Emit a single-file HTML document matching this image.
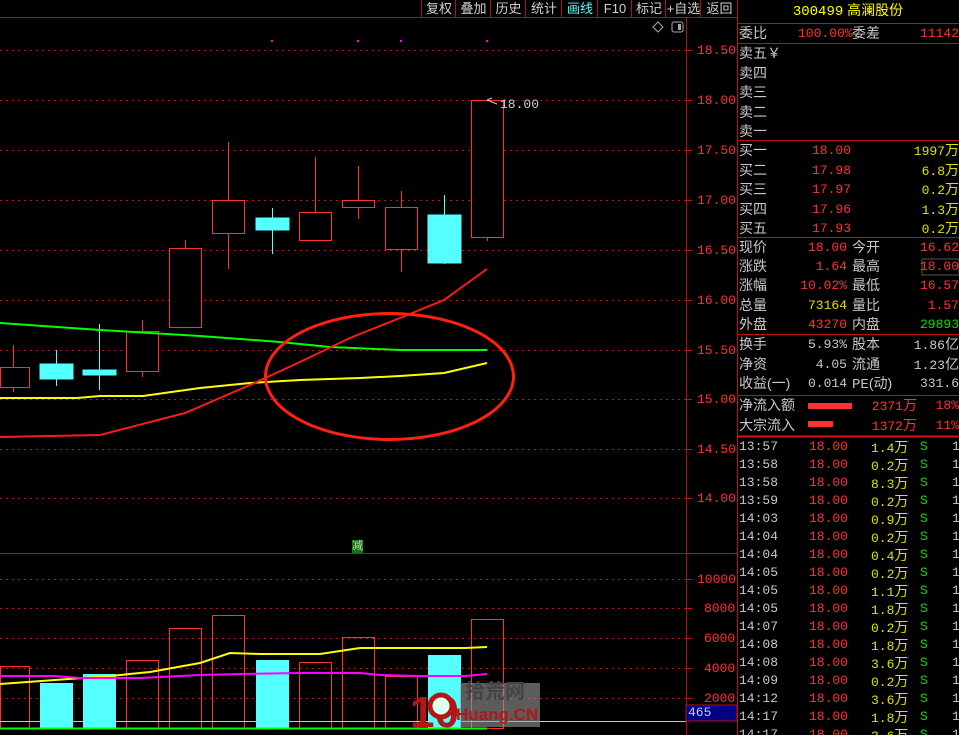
<!DOCTYPE html>
<html><head><meta charset="utf-8">
<style>
html,body{margin:0;padding:0;background:#000;width:959px;height:735px;overflow:hidden}
body{position:relative;font-family:"Liberation Mono","Noto Sans CJK SC",monospace;font-size:13px}
.t{position:absolute;white-space:nowrap;line-height:19px}
.t>div{overflow:visible;white-space:nowrap}
.w{color:#c8c8c8}.r{color:#ff3232}.y{color:#e0e000}.g{color:#00e000}.c{color:#54ffff}
.zh{font-family:"Liberation Sans","Noto Sans CJK SC",sans-serif;font-size:14px}
.h195>div{height:19.5px;line-height:19.5px}
.h192>div{height:19.2px;line-height:19.2px}
.h18>div{height:18px;line-height:18px}
.tb{position:absolute;top:0;height:17px;line-height:17px;text-align:center;color:#d0d0d0;font-family:"Liberation Sans","Noto Sans CJK SC",sans-serif;font-size:13px;border-left:1px solid #b01010}
</style></head><body>
<svg width="959" height="735" style="position:absolute;left:0;top:0">
<line x1="0" y1="17.5" x2="737" y2="17.5" stroke="#b01010"/>
<line x1="686.5" y1="17" x2="686.5" y2="735" stroke="#b01010"/>
<line x1="737.5" y1="0" x2="737.5" y2="735" stroke="#c01010"/>
<g stroke="#c01010" stroke-dasharray="2,4">
<line x1="0" y1="50.5" x2="686" y2="50.5"/><line x1="0" y1="100.5" x2="686" y2="100.5"/>
<line x1="0" y1="150.5" x2="686" y2="150.5"/><line x1="0" y1="200.5" x2="686" y2="200.5"/>
<line x1="0" y1="250.5" x2="686" y2="250.5"/><line x1="0" y1="300.5" x2="686" y2="300.5"/>
<line x1="0" y1="350.5" x2="686" y2="350.5"/><line x1="0" y1="399.5" x2="686" y2="399.5"/>
<line x1="0" y1="449.5" x2="686" y2="449.5"/><line x1="0" y1="498.5" x2="686" y2="498.5"/>
<line x1="0" y1="579.5" x2="686" y2="579.5"/><line x1="0" y1="608.5" x2="686" y2="608.5"/>
<line x1="0" y1="638.5" x2="686" y2="638.5"/><line x1="0" y1="668.5" x2="686" y2="668.5"/>
<line x1="0" y1="698.5" x2="686" y2="698.5"/>
</g>
<g stroke="#c01010">
<line x1="686" y1="50.5" x2="692" y2="50.5"/><line x1="686" y1="100.5" x2="692" y2="100.5"/><line x1="686" y1="150.5" x2="692" y2="150.5"/><line x1="686" y1="200.5" x2="692" y2="200.5"/><line x1="686" y1="250.5" x2="692" y2="250.5"/><line x1="686" y1="300.5" x2="692" y2="300.5"/><line x1="686" y1="350.5" x2="692" y2="350.5"/><line x1="686" y1="399.5" x2="692" y2="399.5"/><line x1="686" y1="449.5" x2="692" y2="449.5"/><line x1="686" y1="498.5" x2="692" y2="498.5"/>
<line x1="686" y1="579.5" x2="692" y2="579.5"/><line x1="686" y1="608.5" x2="692" y2="608.5"/><line x1="686" y1="638.5" x2="692" y2="638.5"/><line x1="686" y1="668.5" x2="692" y2="668.5"/><line x1="686" y1="698.5" x2="692" y2="698.5"/>
<line x1="0" y1="553.5" x2="737" y2="553.5"/>
<line x1="737" y1="23.5" x2="959" y2="23.5"/><line x1="737" y1="43.5" x2="959" y2="43.5"/>
<line x1="737" y1="140.5" x2="959" y2="140.5"/><line x1="737" y1="237.5" x2="959" y2="237.5"/>
<line x1="737" y1="334.5" x2="959" y2="334.5"/><line x1="737" y1="395.5" x2="959" y2="395.5"/>
<line x1="737" y1="436.5" x2="959" y2="436.5" stroke="#e01010" stroke-width="2"/>
</g>
<g fill="#ff00ff"><rect x="271" y="40" width="2" height="2"/><rect x="357" y="40" width="2" height="2"/><rect x="400" y="40" width="2" height="2"/><rect x="486" y="40" width="2" height="2"/></g>
<path d="M658 22 L663 27 L658 32 L653 27 Z" fill="none" stroke="#aaa"/>
<rect x="672" y="22" width="11" height="10" rx="2" fill="none" stroke="#aaa"/><rect x="678" y="24" width="3" height="6" fill="#aaa"/>
<g stroke="#ff3232" fill="none">
<line x1="13.5" y1="345" x2="13.5" y2="392"/><rect x="0.5" y="367.5" width="29" height="20" fill="#000"/>
<line x1="142.5" y1="320" x2="142.5" y2="377"/><rect x="126.5" y="331.5" width="32" height="40" fill="#000"/>
<line x1="185.5" y1="240" x2="185.5" y2="248"/><rect x="169.5" y="248.5" width="32" height="79" fill="#000"/>
<line x1="228.5" y1="142" x2="228.5" y2="269"/><rect x="212.5" y="200.5" width="32" height="33" fill="#000"/>
<line x1="315.5" y1="157" x2="315.5" y2="212"/><rect x="299.5" y="212.5" width="32" height="28" fill="#000"/>
<line x1="358.5" y1="166" x2="358.5" y2="219"/><rect x="342.5" y="200.5" width="32" height="7" fill="#000"/>
<line x1="401.5" y1="191" x2="401.5" y2="272"/><rect x="385.5" y="207.5" width="32" height="42" fill="#000"/>
<line x1="487.5" y1="237" x2="487.5" y2="241"/><rect x="471.5" y="100.5" width="32" height="137" fill="#000"/>
</g>
<g stroke="#54ffff" fill="#54ffff">
<line x1="56.5" y1="350" x2="56.5" y2="386"/><rect x="40" y="364" width="33" height="15"/>
<line x1="99.5" y1="324" x2="99.5" y2="390"/><rect x="83" y="370" width="33" height="5"/>
<line x1="272.5" y1="208" x2="272.5" y2="254"/><rect x="256" y="218" width="33" height="12"/>
<line x1="444.5" y1="195" x2="444.5" y2="264"/><rect x="428" y="215" width="33" height="48"/>
</g>
<polyline points="0,323 100,330 200,336 280,342 330,347 400,350 487,350" fill="none" stroke="#00ff00" stroke-width="2"/>
<polyline points="0,398 77,398 100,396 143,396 200,388 250,383 300,380 360,378 400,376 444,373 487,363" fill="none" stroke="#ffff00" stroke-width="2"/>
<polyline points="0,437 100,435 185,413 250,385 300,362 350,338 400,318 444,300 487,269" fill="none" stroke="#ff1a1a" stroke-width="2"/>
<ellipse cx="389.5" cy="376.5" rx="124" ry="63" fill="none" stroke="#ff2010" stroke-width="3"/>
<path d="M487 100 L497 104 M487 100 L492 98" stroke="#ccc" fill="none"/>
<g stroke="#ff3232" fill="none">
<rect x="0.5" y="666.5" width="29" height="62"/><rect x="126.5" y="660.5" width="32" height="68"/>
<rect x="169.5" y="628.5" width="32" height="100"/><rect x="212.5" y="615.5" width="32" height="113"/>
<rect x="299.5" y="662.5" width="32" height="66"/><rect x="342.5" y="637.5" width="32" height="91"/>
<rect x="385.5" y="676.5" width="32" height="52"/><rect x="471.5" y="619.5" width="32" height="109"/>
</g>
<g fill="#54ffff"><rect x="40" y="683" width="33" height="46"/><rect x="83" y="674" width="33" height="55"/><rect x="256" y="660" width="33" height="69"/><rect x="428" y="655" width="33" height="74"/></g>
<polyline points="0,684 55,680 110,676 150,672 200,663 230,653 260,654 320,654 360,648 465,648 487,647" fill="none" stroke="#ffff00" stroke-width="2"/>
<polyline points="0,676 55,676 80,678 140,678 200,675 240,674 300,673 360,673 380,675 420,676 465,676 487,674" fill="none" stroke="#ff00ff" stroke-width="2"/>
<line x1="0" y1="721.5" x2="686" y2="721.5" stroke="#c8c8c8"/>
<line x1="0" y1="728.5" x2="487" y2="728.5" stroke="#00ff00" stroke-width="2"/>
<rect x="686" y="705" width="51" height="16" fill="#000080" stroke="#c01010"/>
<rect x="352" y="540" width="11" height="13" fill="#0a7a0a"/>
<rect x="808" y="403" width="44" height="6" fill="#ff3232"/>
<rect x="808" y="421" width="25" height="6" fill="#ff3232"/>
<rect x="922" y="259" width="37" height="16" fill="none" stroke="#555"/>
<rect x="460" y="683" width="80" height="44" fill="#999" opacity="0.6"/>
<text x="410" y="727" font-family="Liberation Sans" font-weight="bold" font-size="44" fill="#b01818">10</text>
<circle cx="441" cy="706" r="11" fill="#dfe" stroke="#b01818" stroke-width="5"/>
</svg>
<div class="t zh" style="left:465px;top:680px;color:#444;font-size:20px;font-weight:bold;line-height:24px">拾荒网</div>
<div class="t" style="left:456px;top:705px;color:#b01818;font-family:'Liberation Sans';font-size:17px;font-weight:bold">Huang.CN</div>
<div class="t zh" style="left:352px;top:537px;color:#ccc;font-size:11px">减</div>
<div class="t" style="left:688px;top:703px;color:#c8c8ff">465</div>
<div class="t" style="left:500px;top:95px;color:#ccc">18.00</div>
<div class="tb" style="left:421px;width:34px">复权</div>
<div class="tb" style="left:455px;width:35px">叠加</div>
<div class="tb" style="left:490px;width:35px">历史</div>
<div class="tb" style="left:525px;width:36px">统计</div>
<div class="tb" style="left:561px;width:36px;color:#54ffff">画线</div>
<div class="tb" style="left:597px;width:34px">F10</div>
<div class="tb" style="left:631px;width:34px">标记</div>
<div class="tb" style="left:665px;width:35px">+自选</div>
<div class="tb" style="left:700px;width:37px">返回</div>
<div class="t r" style="left:697px;top:41px">18.50</div><div class="t r" style="left:697px;top:91px">18.00</div>
<div class="t r" style="left:697px;top:141px">17.50</div><div class="t r" style="left:697px;top:191px">17.00</div>
<div class="t r" style="left:697px;top:241px">16.50</div><div class="t r" style="left:697px;top:291px">16.00</div>
<div class="t r" style="left:697px;top:341px">15.50</div><div class="t r" style="left:697px;top:390px">15.00</div>
<div class="t r" style="left:697px;top:440px">14.50</div><div class="t r" style="left:697px;top:489px">14.00</div>
<div class="t r" style="left:697px;top:570px">10000</div><div class="t r" style="left:704px;top:599px">8000</div>
<div class="t r" style="left:704px;top:629px">6000</div><div class="t r" style="left:704px;top:659px">4000</div>
<div class="t r" style="left:704px;top:689px">2000</div>
<div class="t zh" style="left:737px;width:222px;top:1px;text-align:center;color:#ffff00"><span style="font-family:'Liberation Mono'">300499</span> 高澜股份</div>
<div class="t zh w" style="left:739px;top:24px">委比</div><div class="t r" style="left:798px;top:24px">100.00%</div><div class="t zh w" style="left:852px;top:24px">委差</div><div class="t r" style="right:0;top:24px">11142</div>
<div class="t zh w h195" style="left:739px;top:44px"><div>卖五￥</div><div>卖四</div><div>卖三</div><div>卖二</div><div>卖一</div></div>
<div class="t zh w h195" style="left:739px;top:141px"><div>买一</div><div>买二</div><div>买三</div><div>买四</div><div>买五</div></div>
<div class="t r h195" style="left:812px;top:141px"><div>18.00</div><div>17.98</div><div>17.97</div><div>17.96</div><div>17.93</div></div>
<div class="t y h195" style="right:0;top:141px;text-align:right"><div>1997<span class="zh">万</span></div><div>6.8<span class="zh">万</span></div><div>0.2<span class="zh">万</span></div><div>1.3<span class="zh">万</span></div><div>0.2<span class="zh">万</span></div></div>
<div class="t zh w h192" style="left:739px;top:238px"><div>现价</div><div>涨跌</div><div>涨幅</div><div>总量</div><div>外盘</div></div>
<div class="t h192" style="right:112px;top:238px;text-align:right"><div class="r">18.00</div><div class="r">1.64</div><div class="r">10.02%</div><div class="y">73164</div><div class="r">43270</div></div>
<div class="t zh w h192" style="left:852px;top:238px"><div>今开</div><div>最高</div><div>最低</div><div>量比</div><div>内盘</div></div>
<div class="t h192" style="right:0;top:238px;text-align:right"><div class="r">16.62</div><div class="r">18.00</div><div class="r">16.57</div><div class="r">1.57</div><div class="g">29893</div></div>
<div class="t zh w h195" style="left:739px;top:335px"><div>换手</div><div>净资</div><div>收益(一)</div></div>
<div class="t w h195" style="right:112px;top:335px;text-align:right"><div>5.93%</div><div>4.05</div><div>0.014</div></div>
<div class="t zh w h195" style="left:852px;top:335px"><div>股本</div><div>流通</div><div><span style="font-family:'Liberation Mono'">PE</span>(动)</div></div>
<div class="t w h195" style="right:0;top:335px;text-align:right"><div>1.86<span class="zh">亿</span></div><div>1.23<span class="zh">亿</span></div><div>331.6</div></div>
<div class="t zh w h195" style="left:739px;top:396px"><div>净流入额</div><div>大宗流入</div></div>
<div class="t r h195" style="right:42px;top:396px;text-align:right"><div>2371<span class="zh">万</span></div><div>1372<span class="zh">万</span></div></div>
<div class="t r h195" style="right:0;top:396px;text-align:right"><div>18%</div><div>11%</div></div>
<div class="t w h18" style="left:739px;top:438px"><div>13:57</div><div>13:58</div><div>13:58</div><div>13:59</div><div>14:03</div><div>14:04</div><div>14:04</div><div>14:05</div><div>14:05</div><div>14:05</div><div>14:07</div><div>14:08</div><div>14:08</div><div>14:09</div><div>14:12</div><div>14:17</div><div>14:17</div></div>
<div class="t r h18" style="left:809px;top:438px"><div>18.00</div><div>18.00</div><div>18.00</div><div>18.00</div><div>18.00</div><div>18.00</div><div>18.00</div><div>18.00</div><div>18.00</div><div>18.00</div><div>18.00</div><div>18.00</div><div>18.00</div><div>18.00</div><div>18.00</div><div>18.00</div><div>18.00</div></div>
<div class="t y h18" style="left:871px;top:438px"><div>1.4<span class="zh">万</span></div><div>0.2<span class="zh">万</span></div><div>8.3<span class="zh">万</span></div><div>0.2<span class="zh">万</span></div><div>0.9<span class="zh">万</span></div><div>0.2<span class="zh">万</span></div><div>0.4<span class="zh">万</span></div><div>0.2<span class="zh">万</span></div><div>1.1<span class="zh">万</span></div><div>1.8<span class="zh">万</span></div><div>0.2<span class="zh">万</span></div><div>1.8<span class="zh">万</span></div><div>3.6<span class="zh">万</span></div><div>0.2<span class="zh">万</span></div><div>3.6<span class="zh">万</span></div><div>1.8<span class="zh">万</span></div><div>3.6<span class="zh">万</span></div></div>
<div class="t g h18" style="left:920px;top:438px"><div>S</div><div>S</div><div>S</div><div>S</div><div>S</div><div>S</div><div>S</div><div>S</div><div>S</div><div>S</div><div>S</div><div>S</div><div>S</div><div>S</div><div>S</div><div>S</div><div>S</div></div>
<div class="t w h18" style="left:952px;top:438px"><div>1</div><div>1</div><div>1</div><div>1</div><div>1</div><div>1</div><div>1</div><div>1</div><div>1</div><div>1</div><div>1</div><div>1</div><div>1</div><div>1</div><div>1</div><div>1</div><div>1</div></div>
</body></html>
